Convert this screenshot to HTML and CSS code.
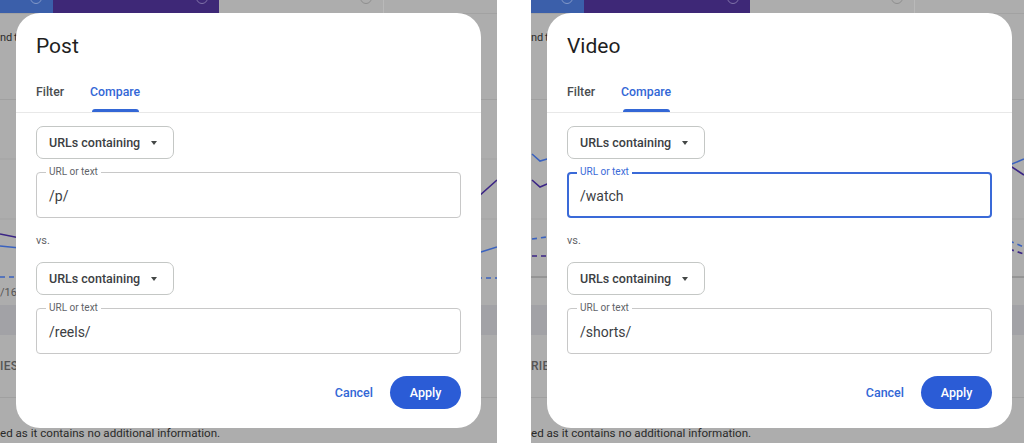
FILE: index.html
```html
<!DOCTYPE html>
<html lang="en">
<head>
<meta charset="utf-8">
<title>Compare filters</title>
<link rel="stylesheet" href="styles.css">
</head>
<body>
<div class="stage">

  <!-- Post comparison -->
  <section class="panel panel-a">
    <div class="page">
      <div class="cards">
        <div class="card card-blue"><span class="info"></span></div>
        <div class="card card-purple"><span class="info"></span></div>
        <div class="card card-grey"><span class="info"></span></div>
        <div class="card card-rest"></div>
      </div>
      <p class="lead">nd t</p>
      <svg class="chart" viewBox="0 0 497 200" preserveAspectRatio="none" aria-hidden="true">
        <line class="grid" x1="0" y1="59" x2="497" y2="59"/>
        <line class="grid" x1="0" y1="119" x2="497" y2="119"/>
        <polyline class="ln-purple" points="0,134 20,138 120,128 250,114 380,124 470,104 497,80"/>
        <polyline class="ln-blue" points="0,146 20,148 140,150 300,156 481,152 497,147"/>
        <polyline class="ln-blue dash" points="0,177 200,178 497,178"/>
        <text class="axis" x="0" y="196">/16</text>
      </svg>
      <div class="band"></div>
      <div class="section"><span class="section-name">IES</span></div>
      <p class="note">ed as it contains no additional information.</p>
    </div>

    <div class="dialog">
      <h2 class="dlg-title">Post</h2>
      <div class="tabs">
        <span class="tab">Filter</span>
        <span class="tab is-active">Compare</span>
      </div>
      <div class="dlg-body">
        <div class="select">URLs containing <span class="caret"></span></div>
        <div class="field"><span class="field-label">URL or text</span><span class="field-value">/p/</span></div>
        <div class="vs">vs.</div>
        <div class="select">URLs containing <span class="caret"></span></div>
        <div class="field"><span class="field-label">URL or text</span><span class="field-value">/reels/</span></div>
      </div>
      <div class="actions">
        <span class="btn-text">Cancel</span>
        <span class="btn-filled">Apply</span>
      </div>
    </div>
  </section>

  <!-- Video comparison -->
  <section class="panel panel-b">
    <div class="page">
      <div class="cards">
        <div class="card card-blue"><span class="info"></span></div>
        <div class="card card-purple"><span class="info"></span></div>
        <div class="card card-grey"><span class="info"></span></div>
        <div class="card card-rest"></div>
      </div>
      <p class="lead">nd t</p>
      <svg class="chart" viewBox="0 0 493 200" preserveAspectRatio="none" aria-hidden="true">
        <line class="grid" x1="0" y1="119" x2="493" y2="119"/>
        <line class="axis-line" x1="0" y1="177" x2="493" y2="177"/>
        <polyline class="ln-blue" points="1,54 9,61 16,59 150,70 300,60 481,64 493,59"/>
        <polyline class="ln-purple" points="1,80 9,87 16,84 150,90 300,75 481,67 493,75"/>
        <polyline class="ln-blue dash" points="1,139 16,137 200,140 481,142 493,147"/>
        <polyline class="ln-purple dash" points="1,156 16,156 200,152 481,150 493,154"/>
      </svg>
      <div class="band"></div>
      <div class="section"><span class="section-name">RIES</span></div>
      <p class="note">ed as it contains no additional information.</p>
    </div>

    <div class="dialog">
      <h2 class="dlg-title">Video</h2>
      <div class="tabs">
        <span class="tab">Filter</span>
        <span class="tab is-active">Compare</span>
      </div>
      <div class="dlg-body">
        <div class="select">URLs containing <span class="caret"></span></div>
        <div class="field is-focused"><span class="field-label">URL or text</span><span class="field-value">/watch</span></div>
        <div class="vs">vs.</div>
        <div class="select">URLs containing <span class="caret"></span></div>
        <div class="field"><span class="field-label">URL or text</span><span class="field-value">/shorts/</span></div>
      </div>
      <div class="actions">
        <span class="btn-text">Cancel</span>
        <span class="btn-filled">Apply</span>
      </div>
    </div>
  </section>

</div>
</body>
</html>
```

FILE: styles.css
```css
* { box-sizing: border-box; }

body {
  margin: 0;
  background: #fff;
  font-family: Roboto, "Liberation Sans", Arial, sans-serif;
}

.stage {
  display: flex;
  gap: 34px;
  height: 443px;
}

/* ---------- dimmed report page behind the modal ---------- */

.panel {
  position: relative;
  overflow: hidden;
  background: #adadad;
}
.panel-a { width: 497px; }
.panel-b { flex: 1; }

.page {
  display: flex;
  flex-direction: column;
  height: 100%;
}

.cards {
  display: flex;
  height: 14px;
  border-bottom: 1px solid #a2a2a2;
}
.card {
  display: flex;
  justify-content: flex-end;
  padding-right: 11px;
  overflow: hidden;
}
.card-blue { width: 53px; background: #3b5faa; }
.card-purple { width: 166px; background: #3e2877; }
.card-grey { width: 165px; border-right: 1px solid #b9b9b9; }
.card-rest { flex: 1; }

.info {
  width: 12px;
  height: 12px;
  margin-top: -8px;
  border: 1.5px solid #8f8f8f;
  border-radius: 50%;
}
.card-blue .info { border-color: #8298c8; }
.card-purple .info { border-color: #7f72a8; }

.lead {
  margin: 0;
  height: 86px;
  padding-top: 16px;
  font-size: 11px;
  line-height: 16px;
  word-spacing: -1px;
  color: #2c2c2c;
  border-bottom: 1px solid #a0a0a0;
}

.chart {
  display: block;
  width: 100%;
  height: 200px;
}
.chart .grid { stroke: #a3a3a3; stroke-width: 1; }
.chart .axis-line { stroke: #7d7d7d; stroke-width: 1; }
.chart polyline { fill: none; stroke-width: 1.6; }
.chart .ln-blue { stroke: #3a62bf; }
.chart .ln-purple { stroke: #3b2585; }
.chart .dash { stroke-dasharray: 5 4; }
.chart .axis { font-size: 11px; fill: #555; font-family: Roboto, sans-serif; }

.band {
  height: 30px;
  margin-top: 5px;
  background: #a2a2a6;
}

.section {
  height: 63px;
  display: flex;
  align-items: center;
  border-bottom: 1px solid #a0a0a0;
  font-size: 12px;
  font-weight: 500;
  letter-spacing: 0.3px;
  color: #555;
}

.note {
  margin: 0;
  padding-top: 27px;
  font-size: 11.6px;
  line-height: 16px;
  color: #2a2a2a;
  white-space: nowrap;
}

/* ---------- modal dialog ---------- */

.dialog {
  position: absolute;
  left: 16px;
  top: 13px;
  width: 465px;
  height: 415px;
  border-radius: 24px;
  background: #fff;
  display: flex;
  flex-direction: column;
}

.dlg-title {
  margin: 0;
  padding: 19px 20px 0;
  font-size: 21px;
  line-height: 28px;
  font-weight: 400;
  color: #1f1f1f;
}

.tabs {
  display: flex;
  gap: 26px;
  height: 45px;
  margin-top: 8px;
  padding: 0 20px;
  border-bottom: 1px solid #e8e8e8;
}
.tab {
  position: relative;
  display: flex;
  align-items: center;
  padding-top: 4px;
  font-size: 12.3px;
  font-weight: 500;
  color: #4a4d50;
}
.tab.is-active { color: #3367d6; }
.tab.is-active::after {
  content: "";
  position: absolute;
  left: 2px;
  right: 1px;
  bottom: 0;
  height: 3px;
  border-radius: 3px 3px 0 0;
  background: #3367d6;
}

.dlg-body {
  display: flex;
  flex-direction: column;
  padding: 13px 20px 0;
}

.select {
  align-self: flex-start;
  width: 138px;
  height: 33px;
  display: flex;
  align-items: center;
  justify-content: space-between;
  padding: 0 16px 0 12px;
  border: 1px solid #c4c7c5;
  border-radius: 7px;
  font-size: 12.5px;
  font-weight: 500;
  color: #3c4043;
}
.caret {
  width: 0;
  height: 0;
  border-left: 3px solid transparent;
  border-right: 3px solid transparent;
  border-top: 4px solid #444746;
}

.field {
  position: relative;
  height: 46px;
  margin-top: 13px;
  display: flex;
  align-items: center;
  padding: 0 12px;
  border: 1px solid #c8c8c8;
  border-radius: 4px;
}
.field-label {
  position: absolute;
  top: -7px;
  left: 9px;
  padding: 0 3px;
  background: #fff;
  font-size: 10px;
  line-height: 12px;
  color: #5f6368;
}
.field-value {
  padding-top: 1px;
  font-size: 14px;
  color: #3c4043;
}
.field.is-focused {
  border: 2px solid #3a6ad8;
  padding: 0 11px;
}
.field.is-focused .field-label {
  top: -8px;
  left: 8px;
  color: #3a6ad8;
}

.vs {
  height: 44px;
  display: flex;
  align-items: center;
  font-size: 11px;
  color: #5f6368;
}

.actions {
  margin-top: auto;
  padding: 0 20px 19px;
  display: flex;
  justify-content: flex-end;
  align-items: center;
  gap: 17px;
}
.btn-text {
  font-size: 12.5px;
  font-weight: 500;
  color: #3367d6;
}
.btn-filled {
  width: 71px;
  height: 33px;
  display: flex;
  align-items: center;
  justify-content: center;
  border-radius: 17px;
  background: #2b5cd6;
  font-size: 12.5px;
  font-weight: 500;
  color: #fff;
}
```
